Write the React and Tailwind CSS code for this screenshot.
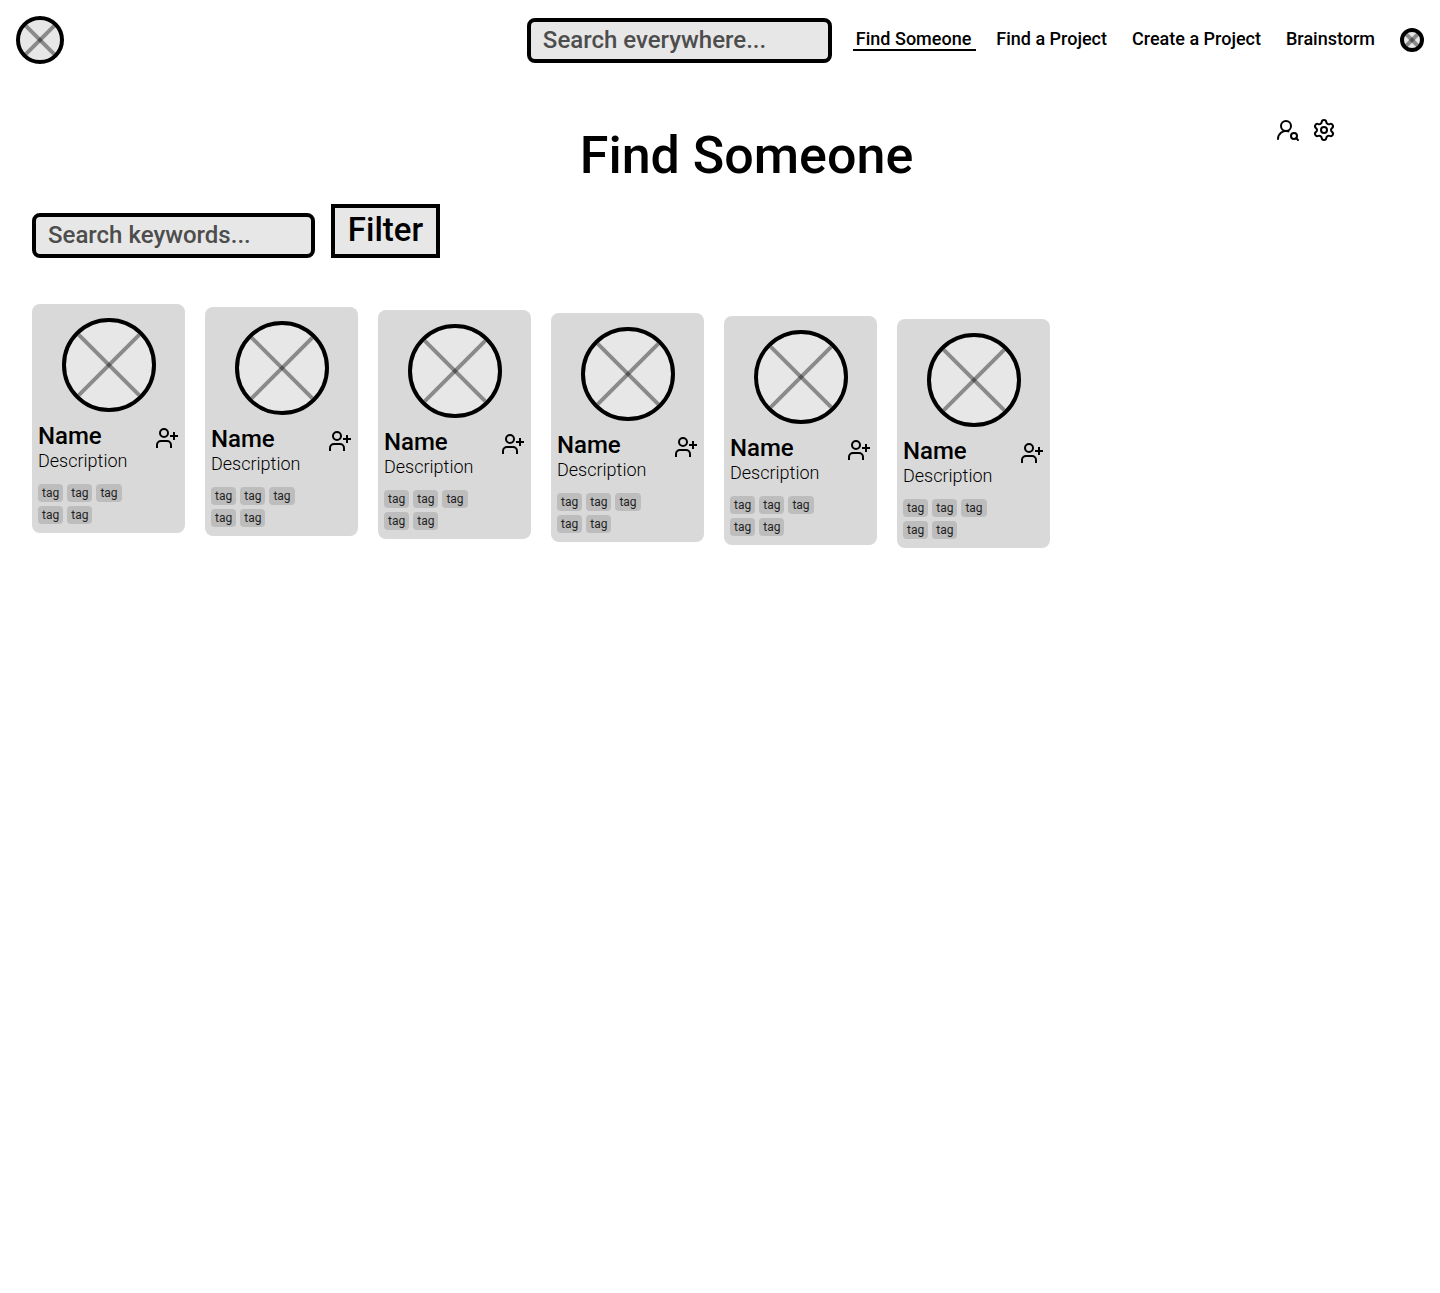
import { Settings, UserRoundSearch } from "lucide-react";

const people = Array.from({ length: 6 }, (_, i) => ({
  id: i,
  name: "Name",
  description: "Description",
  tags: ["tag", "tag", "tag", "tag", "tag"],
}));

const links = ["Find Someone", "Find a Project", "Create a Project", "Brainstorm"];

/* Round image placeholder: a bordered disc crossed by two translucent lines. */
function Placeholder({ size, className = "" }) {
  const c = size / 2;
  const d = (c - 4) * 0.7071 + 1;
  return (
    <svg
      width={size}
      height={size}
      viewBox={`0 0 ${size} ${size}`}
      className={`block shrink-0 ${className}`}
      aria-hidden="true"
    >
      <circle cx={c} cy={c} r={c - 2} fill="#e7e7e7" />
      <g stroke="#000" strokeOpacity="0.4" strokeWidth="4">
        <line x1={c - d} y1={c - d} x2={c + d} y2={c + d} />
        <line x1={c + d} y1={c - d} x2={c - d} y2={c + d} />
      </g>
      <circle cx={c} cy={c} r={c - 2} fill="none" stroke="#000" strokeWidth="4" />
    </svg>
  );
}

function AddUserIcon() {
  return (
    <svg width="24" height="24" viewBox="0 0 24 24" fill="none" stroke="#000" strokeWidth="2" aria-hidden="true">
      <circle cx="9" cy="7" r="4" />
      <path d="M2 22v-3a4 4 0 0 1 4-4h6a4 4 0 0 1 4 4v3" />
      <path d="M19 6v8M15 10h8" />
    </svg>
  );
}

function Card({ person, index }) {
  return (
    <article
      className="flex w-[153px] flex-col rounded-lg bg-[#d9d9d9] px-1.5 pt-3.5 pb-[9px]"
      style={{ marginTop: index * 3 }}
    >
      <Placeholder size={94} className="mx-auto" />
      <div className="mt-3 flex items-start justify-between">
        <div>
          <h2 className="text-2xl leading-6 font-medium">{person.name}</h2>
          <p className="text-lg leading-[26px] font-light">{person.description}</p>
        </div>
        <button type="button" aria-label="Add person" className="mt-0.5">
          <AddUserIcon />
        </button>
      </div>
      <ul className="mt-2.5 flex flex-wrap gap-1 pr-10">
        {person.tags.map((tag, i) => (
          <li key={i} className="h-[18px] rounded-sm bg-[#bdbdbd] px-1 text-xs leading-[18px] text-[#1f1f1f]">
            {tag}
          </li>
        ))}
      </ul>
    </article>
  );
}

export default function App() {
  return (
    <div className="bg-white font-[Roboto,sans-serif] text-black">
      <header className="flex h-20 items-center justify-between px-4">
        <a href="#home" aria-label="Home">
          <Placeholder size={48} />
        </a>
        <div className="flex items-center">
          <input
            type="search"
            aria-label="Search everywhere"
            placeholder="Search everywhere..."
            className="h-[45px] w-[305px] rounded-lg border-4 border-black bg-[#e7e7e7] px-3 text-2xl font-medium placeholder:text-[#4d4d4d]"
          />
          <nav className="ml-[21px] flex gap-[17px] text-lg leading-5 font-medium">
            {links.map((label, i) => (
              <a
                key={label}
                href="#nav"
                className={
                  i === 0
                    ? "border-b-2 border-black pr-[5px] pl-[3px]"
                    : "border-b-2 border-transparent pr-[5px] pl-[3px]"
                }
              >
                {label}
              </a>
            ))}
          </nav>
          <a href="#profile" aria-label="Profile" className="ml-5">
            <Placeholder size={24} />
          </a>
        </div>
      </header>

      <main>
        <div className="flex items-start pt-[38px] pr-[104px] pl-[157px]">
          <div className="flex-1" />
          <h1 className="mt-1.5 text-[52px] leading-[64px] font-medium">Find Someone</h1>
          <div className="flex flex-1 justify-end gap-3">
            <button type="button" aria-label="Search people">
              <UserRoundSearch size={24} color="#000" />
            </button>
            <button type="button" aria-label="Settings">
              <Settings size={24} color="#000" />
            </button>
          </div>
        </div>

        <div className="mt-4 flex items-end gap-4 px-8">
          <input
            type="search"
            aria-label="Search keywords"
            placeholder="Search keywords..."
            className="h-[45px] w-[283px] rounded-lg border-4 border-black bg-[#e7e7e7] px-3 pb-0.5 text-2xl font-medium placeholder:text-[#4d4d4d]"
          />
          <button
            type="button"
            className="h-[54px] w-[109px] border-4 border-black bg-[#e7e7e7] pb-0.5 text-[33px] leading-[38px] font-medium"
          >
            Filter
          </button>
        </div>

        <section className="mt-[46px] flex flex-wrap items-start gap-5 px-8">
          {people.map((p, i) => (
            <Card key={p.id} person={p} index={i} />
          ))}
        </section>
      </main>
    </div>
  );
}
